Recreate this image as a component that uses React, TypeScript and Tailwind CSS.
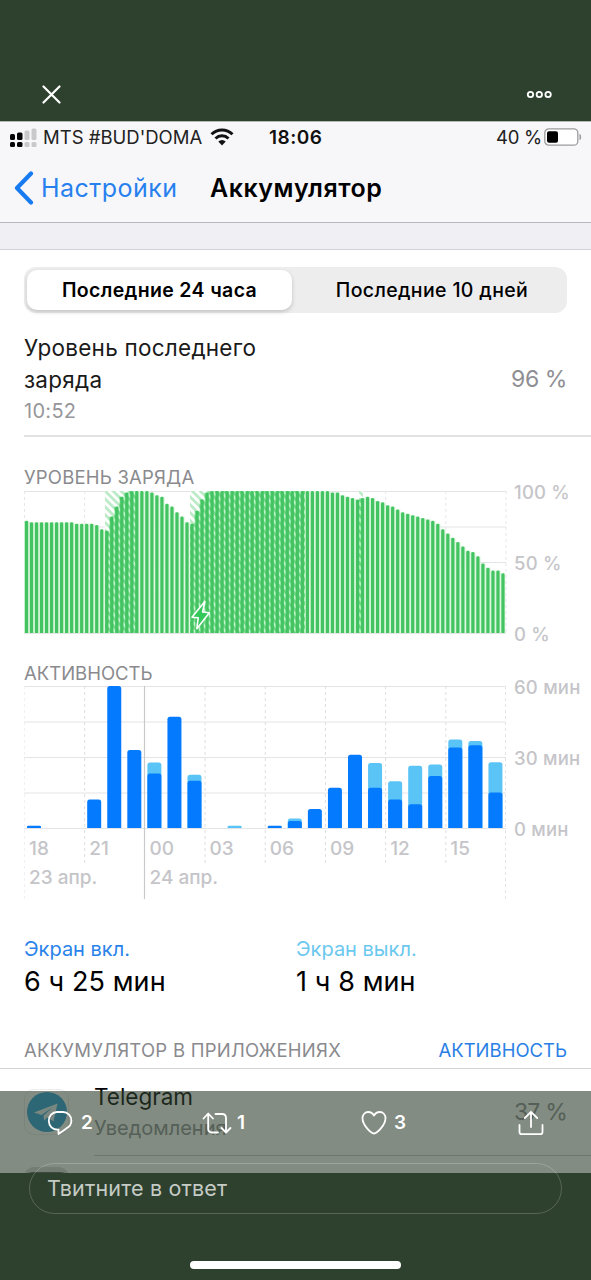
import React from 'react';

const STEP = 481.5 / 96;
const HOUR = 481.5 / 24;

const levels: number[] = [
  79, 78, 78, 78, 78, 78, 78, 78, 78, 78, 77, 77, 77, 77, 76, 73,
  72, 82, 89, 96, 99, 100, 100, 100, 100, 99, 97, 96, 91, 89, 85, 82,
  78, 77, 86, 94, 99, ...Array<number>(24).fill(100), 99, 99, 97,
  96, 95, 94, 95, 96, 95, 93, 92, 90, 89, 87, 85, 84, 83, 82, 81,
  80, 79, 77, 73, 70, 67, 64, 61, 58, 57, 54, 49, 46, 44, 44, 42,
];

// x and width of every charging period
const charging = [
  { x: 81, width: 33 },
  { x: 166, width: 115 },
  { x: 335, width: 4 },
];

// minutes with the screen on and off, one entry per hour
const activity: [number, number][] = [
  [1, 0], [0, 0], [0, 0], [12, 0], [60, 0], [33, 0], [23, 4.7], [47, 0],
  [20, 2.5], [0, 0], [0, 1], [0, 0], [1, 0], [3, 1], [8, 0], [17, 0],
  [31, 0], [17, 10.5], [12, 7.8], [10, 16.3], [22, 4.8], [34, 3.4], [35, 1.8], [15, 12.8],
];

const hours = ['18', '21', '00', '03', '06', '09', '12', '15'];

const GridLines: React.FC = () => (
  <>
    {[0, 1, 2, 3, 4].map((n) => (
      <line key={n} x1="0" x2="482" y1={0.5 + n * 35.5} y2={0.5 + n * 35.5} stroke="#e4e4e7" />
    ))}
  </>
);

const LevelChart: React.FC = () => (
  <svg width="483" height="143" className="block shrink-0">
    <defs>
      <pattern id="hatch" width="5.6" height="5.6" patternUnits="userSpaceOnUse" patternTransform="rotate(-45)">
        <rect width="2.8" height="5.6" fill="#bdeac7" />
      </pattern>
      <pattern id="hatchDark" width="5.6" height="5.6" patternUnits="userSpaceOnUse" patternTransform="rotate(-45)">
        <rect width="5.6" height="5.6" fill="#b4f2c0" />
        <rect width="2.8" height="5.6" fill="#6bd681" />
      </pattern>
      <clipPath id="under">
        {levels.map((v, i) => (
          <rect key={i} x={i * STEP} width={STEP + 0.1} y={142 - v * 1.42} height={v * 1.42} />
        ))}
      </clipPath>
    </defs>
    <GridLines />
    {[0, 1, 2, 3, 4, 5, 6, 7, 8].map((n) => (
      <line key={n} x1={n * 60.19 + 0.5} x2={n * 60.19 + 0.5} y1="0" y2="142" stroke="#e6e6e9" strokeDasharray="3 3" />
    ))}
    {charging.map((c) => (
      <g key={c.x}>
        <rect x={c.x} width={c.width} y="0" height="142" fill="#fff" />
        <rect x={c.x} width={c.width} y="0" height="142" fill="url(#hatch)" />
      </g>
    ))}
    <g clipPath="url(#under)">
      <rect width="481.5" height="142" fill="#d3f6d6" />
      {charging.map((c) => (
        <rect key={c.x} x={c.x} width={c.width} y="0" height="142" fill="url(#hatchDark)" />
      ))}
    </g>
    {levels.map((v, i) => (
      <path
        key={i}
        d={`M${i * STEP + 0.9} 142V${143.4 - v * 1.42}q0 -1.4 1.6 -1.4t1.6 1.4V142z`}
        fill="#43c362"
      />
    ))}
    <path
      d="M180.8 110.5L168 126.2L174.2 126.8L172.8 137.8L185.3 121.8L178.6 121z"
      fill="#34c759"
      stroke="#fff"
      strokeWidth="1.6"
      strokeLinejoin="round"
    />
  </svg>
);

const bar = (x: number, minutes: number) => {
  const h = (minutes * 142) / 60;
  const r = Math.min(2.5, h / 2);
  return `M${x} 142V${142 - h + r}q0 ${-r} ${r} ${-r}h${14 - 2 * r}q${r} 0 ${r} ${r}V142z`;
};

const ActivityChart: React.FC = () => (
  <svg width="483" height="213" className="absolute left-0 top-0">
    <GridLines />
    {hours.map((h, n) =>
      n === 2 ? (
        <line key={h} x1="120.5" x2="120.5" y1="0" y2="213" stroke="#c9c9cc" strokeWidth="1.2" />
      ) : (
        <line
          key={h}
          x1={n * 60.19 + 0.5}
          x2={n * 60.19 + 0.5}
          y1="0"
          y2={n === 0 ? 213 : 177}
          stroke={n === 0 ? '#f0f0f3' : '#dededf'}
          strokeDasharray="3 3"
        />
      )
    )}
    <line x1="481.5" x2="481.5" y1="0" y2="213" stroke="#e4e4e7" strokeDasharray="3 3" />
    {activity.map(([on, off], i) => {
      const x = 3 + i * HOUR;
      return (
        <g key={i}>
          {off > 0 && <path d={bar(x, on + off)} fill="#5ac4f7" />}
          {on > 0 && <path d={bar(x, on)} fill="#047aff" />}
        </g>
      );
    })}
  </svg>
);

const Axis: React.FC<{ labels: string[] }> = ({ labels }) => (
  <div className="-mt-[9px] ml-[7px] flex h-[162px] flex-col justify-between text-[18.5px] leading-5 font-medium tracking-[0.2px] text-[#c5c5c9]">
    {labels.map((l) => (
      <span key={l} className="whitespace-nowrap">{l}</span>
    ))}
  </div>
);

const StatusBar: React.FC = () => (
  <div className="flex h-[31px] items-center pl-[10px] text-[18.5px] leading-[31px] text-[#222]">
    <svg width="27" height="20" viewBox="0 0 27 20" className="shrink-0">
      <g fill="#050505">
        <rect x="0" y="6" width="5" height="6" rx="1.5" />
        <rect x="0" y="14" width="5" height="5" rx="1.5" />
        <rect x="7" y="4.5" width="5.5" height="7.5" rx="1.5" />
        <rect x="7" y="14" width="5.5" height="5" rx="1.5" />
      </g>
      <g fill="#c9c9cb">
        <rect x="14.5" y="2.5" width="5" height="9.5" rx="1.5" />
        <rect x="14.5" y="14" width="5" height="5" rx="1.5" />
        <rect x="21.5" y="0.5" width="5" height="11.5" rx="1.5" />
        <rect x="21.5" y="14" width="5" height="5" rx="1.5" />
      </g>
    </svg>
    <span className="ml-[6px] w-[167px] shrink-0 whitespace-nowrap">MTS #BUD'DOMA</span>
    <svg width="24" height="18" viewBox="0 0 24 18" className="mb-[2px] shrink-0" fill="none" stroke="#111" strokeWidth="3">
      <path d="M1.500 6.300a15 15 0 0 1 21 0" />
      <path d="M5.500 10.500a9.300 9.300 0 0 1 13 0" />
      <path d="M12 17.500l-3.700-3.900a5.200 5.200 0 0 1 7.400 0z" fill="#111" stroke="none" />
    </svg>
    <span className="ml-[35px] w-[227px] shrink-0 text-[19px] font-semibold tracking-[0.5px] text-[#111]">18:06</span>
    <span className="w-[48px] shrink-0 whitespace-nowrap tracking-[-0.3px]">40 %</span>
    <svg width="38" height="18" viewBox="0 0 38 18" className="mb-[2px] shrink-0">
      <rect x="0.800" y="0.800" width="33" height="16.400" rx="4" fill="#fff" stroke="#9b9b9d" strokeWidth="1.300" />
      <rect x="3" y="3.300" width="11" height="11.400" rx="2" fill="#000" />
      <path d="M36 6.500q1.500 2.500 0 5z" fill="#9b9b9d" stroke="#9b9b9d" />
    </svg>
  </div>
);

const App: React.FC = () => {
  return (
    <div className="relative h-[1280px] w-[591px] overflow-hidden bg-[#2e402e] font-['Inter','Liberation_Sans',sans-serif] text-black">
      {/* Viewer header */}
      <header className="flex h-[121px] items-end justify-between pr-[38px] pb-[16px] pl-[42px]">
        <svg width="20" height="20" viewBox="0 0 20 20" stroke="#fff" strokeWidth="2.200" strokeLinecap="round">
          <path d="M1.500 1.500l16 16M17.500 1.500l-16 16" />
        </svg>
        <svg width="27" height="20" viewBox="0 0 27 20" fill="none" stroke="#fff" strokeWidth="1.800">
          <circle cx="4.500" cy="9.500" r="2.700" />
          <circle cx="13.300" cy="9.500" r="2.700" />
          <circle cx="22.100" cy="9.500" r="2.700" />
        </svg>
      </header>

      {/* Photo */}
      <main className="h-[1052px] overflow-hidden bg-white">
        <div className="h-[102px] border-t border-b border-t-[#b5bab5] border-b-[#b9b9bd] bg-[#f7f7fa]">
          <StatusBar />
          <div className="flex h-[70px] items-center pl-[14px]">
            <svg width="20" height="34" viewBox="0 0 20 34" fill="none" stroke="#187aef" strokeWidth="4.200" strokeLinecap="round" strokeLinejoin="round">
              <path d="M17 2.500L3 17L17 31.500" />
            </svg>
            <span className="mt-[2px] ml-[7px] w-[169px] text-[25px] tracking-[0.45px] text-[#2880ee]">Настройки</span>
            <h1 className="mt-[2px] text-[25px] font-semibold tracking-[0.5px]">Аккумулятор</h1>
          </div>
        </div>
        <div className="h-[27px] border-b border-[#d2d2d6] bg-[#efeff4]" />

        <div className="mt-[17px] ml-6 flex h-[46px] w-[543px] rounded-[12px] bg-[#ededee] p-[3px] text-[19.5px] leading-[41px] tracking-[0.35px]">
          <div className="w-[265px] rounded-[10px] bg-white text-center font-semibold shadow-[0_2px_4px_rgba(0,0,0,0.18)]">
            Последние 24 часа
          </div>
          <div className="flex-1 pl-[8px] text-center font-medium">Последние 10 дней</div>
        </div>

        <div className="ml-6 flex h-[124px] items-center justify-between border-b-2 border-[#e2e2e4] pr-6">
          <div className="mt-[9px]">
            <p className="w-[270px] text-[22.5px] leading-8 tracking-[0.25px] text-[#1a1a1a]">
              Уровень последнего
              <br />
              заряда
            </p>
            <p className="text-[20px] leading-[30px] tracking-[0.3px] text-[#96969a]">10:52</p>
          </div>
          <span className="mt-[11px] text-[23px] tracking-[-0.4px] text-[#8e8e93]">96 %</span>
        </div>

        <section className="ml-6 pt-[30px]">
          <h2 className="h-[24px] text-[18.5px] leading-[21px] tracking-[0.2px] text-[#8a8a8e]">УРОВЕНЬ ЗАРЯДА</h2>
          <div className="flex h-[143px]">
            <LevelChart />
            <Axis labels={['100 %', '50 %', '0 %']} />
          </div>
        </section>

        <section className="ml-6 pt-[28px]">
          <h2 className="h-[24px] text-[18.5px] leading-[22px] text-[#8a8a8e]">АКТИВНОСТЬ</h2>
          <div className="relative h-[213px]">
            <ActivityChart />
            <div className="flex h-[143px] pl-[483px]">
              <Axis labels={['60 мин', '30 мин', '0 мин']} />
            </div>
            <div className="relative mt-[9px] flex text-[19px] leading-[22px] font-medium text-[#c5c5c9]">
              {hours.map((h) => (
                <span key={h} className="w-[60.19px] pl-[5px]">{h}</span>
              ))}
            </div>
            <div className="relative mt-[7px] flex text-[19px] leading-[22px] font-medium text-[#c5c5c9]">
              <span className="w-[120.5px] pl-[5px]">23 апр.</span>
              <span className="pl-[5px]">24 апр.</span>
            </div>
          </div>
        </section>

        <div className="mt-[38px] ml-6 flex">
          <div className="w-[272px]">
            <p className="text-[20px] leading-6 text-[#2a83ea]">Экран вкл.</p>
            <p className="mt-[3px] text-[27px] leading-9 tracking-[0.1px]">6 ч 25 мин</p>
          </div>
          <div>
            <p className="text-[20px] leading-6 text-[#6bc8ef]">Экран выкл.</p>
            <p className="mt-[3px] text-[27px] leading-9 tracking-[0.1px]">1 ч 8 мин</p>
          </div>
        </div>

        <div className="mt-[34px] flex h-[35px] justify-between border-b border-[#d3d3d6] px-6 text-[18.5px] leading-[32px]">
          <span className="tracking-[0.25px] text-[#8a8a8e]">АККУМУЛЯТОР В ПРИЛОЖЕНИЯХ</span>
          <span className="text-[#2a7fe6]">АКТИВНОСТЬ</span>
        </div>

        <div className="flex h-[87px] pl-6">
          <div className="mt-[20px] flex h-[46px] w-[45px] items-center justify-center rounded-[10px] border border-[#ececec]">
            <svg width="40" height="40" viewBox="0 0 40 40">
              <circle cx="20" cy="20" r="20" fill="#2ba1dc" />
              <path d="M7 20.500L30.500 11.500L26.500 29.500L20.500 25.500L17 28.500L16.500 23.500L25.500 15.500L14.500 23z" fill="#e8f3f9" />
            </svg>
          </div>
          <div className="ml-[25px] flex flex-1 justify-between border-b border-[#c8c8cc] pt-[14px] pr-6">
            <div>
              <p className="text-[22.5px] leading-7">Telegram</p>
              <p className="mt-[4px] text-[20px] leading-[26px] text-[#8e8e93]">Уведомления</p>
            </div>
            <span className="pt-[13px] text-[23px] leading-8 tracking-[-0.8px] text-[#8e8e93]">37 %</span>
          </div>
        </div>
        <div className="mt-[11px] ml-6 h-[45px] w-[45px] rounded-[10px] border-t-[5px] border-[#d9d9d9] bg-[#555]" />
      </main>

      {/* Tweet actions over the photo */}
      <footer className="absolute inset-x-0 bottom-0 h-[189px] bg-[#2e402e]/60">
        <div className="flex h-[64px] items-center text-[19px] leading-[26px] font-semibold text-white">
          <div className="ml-[47px] flex w-[155px] items-center">
            <svg width="26" height="26" viewBox="0 0 26 26" fill="none" stroke="#fff" strokeWidth="1.800" strokeLinejoin="round">
              <path d="M10 2h6a8.400 8.400 0 0 1 8.400 8.700c0 3.500-2 6-5 7.700L11.500 24v-4.300C5.500 20 1.800 16 1.800 10.800A8.400 8.400 0 0 1 10 2z" />
            </svg>
            <span className="ml-2">2</span>
          </div>
          <div className="flex w-[159px] items-center">
            <svg width="30" height="26" viewBox="0 0 30 26" fill="none" stroke="#fff" strokeWidth="1.800" strokeLinecap="round" strokeLinejoin="round">
              <path d="M1.500 8.500L6.200 3.500L11 8.500M6.200 4v14.500q0 4 4 4H16" />
              <path d="M13.500 4H20q4 0 4 4v14.500M19.500 18L24 22.500L28.500 18" />
            </svg>
            <span className="ml-[5px]">1</span>
          </div>
          <div className="flex w-[157px] items-center">
            <svg width="26" height="26" viewBox="0 0 26 26" fill="none" stroke="#fff" strokeWidth="1.800" strokeLinejoin="round">
              <path d="M13 5.500C14.500 2.800 17 2 18.800 2C22 2 24.500 4.600 24.500 8.200C24.500 15 16 23.500 13 23.500C10 23.500 1.500 15 1.500 8.200C1.500 4.600 4 2 7.200 2C9 2 11.500 2.800 13 5.500z" />
            </svg>
            <span className="ml-[7px]">3</span>
          </div>
          <svg width="26" height="26" viewBox="0 0 26 26" fill="none" stroke="#fff" strokeWidth="1.800" strokeLinecap="round" strokeLinejoin="round">
            <path d="M13 17V2M6.800 8L13 1.800L19.200 8M1.500 15v7q0 2.200 2.200 2.200h18.600q2.200 0 2.200-2.200v-7" />
          </svg>
        </div>
      </footer>
      <div className="absolute inset-x-0 top-[1173px] h-[107px] bg-[#2e402e]" />
      <div className="absolute inset-x-[29px] top-[1163px] h-[51px] rounded-full border-[1.5px] border-white/20 pl-[17px] text-[21.5px] leading-[49px] tracking-[0.15px] text-[#c5cbc5]">
        Твитните в ответ
      </div>
      <div className="absolute top-[1261px] left-[190px] h-2 w-[211px] rounded-full bg-white" />
    </div>
  );
};

export default App;
